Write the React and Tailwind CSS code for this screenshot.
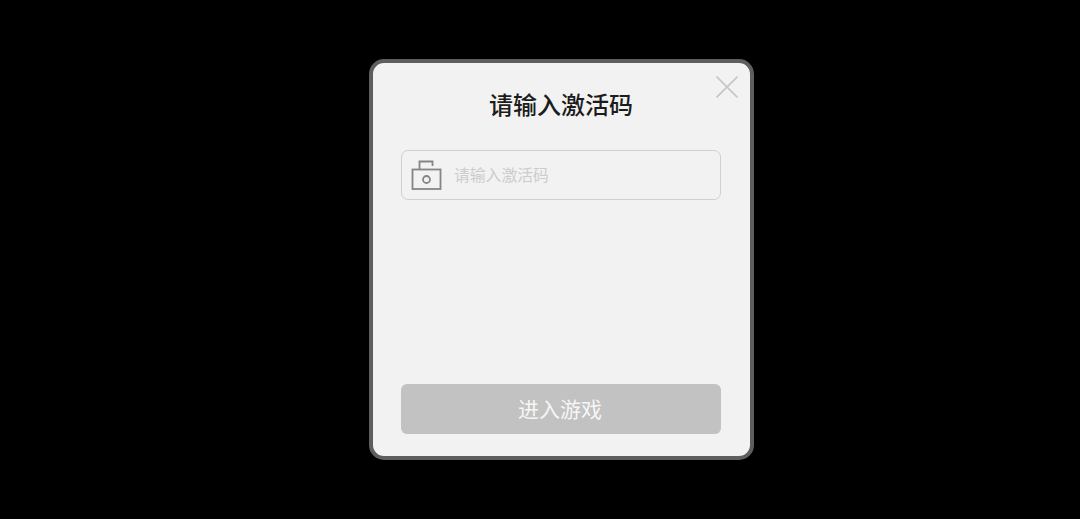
export default function App() {
  return (
    <div className="min-h-screen bg-black pl-[369px] pt-[59px] font-['Noto_Sans_CJK_SC',sans-serif]">
      <div className="relative flex h-[401px] w-[385px] flex-col rounded-[15px] border-[4px] border-[#5e5e5e] bg-[#f2f2f2] pl-[28px] pr-[29px]">
        {/* Botón de cerrar */}
        <button className="absolute right-[12px] top-[13px] h-[22px] w-[22px]">
          <svg width="22" height="22" viewBox="0 0 22 22" fill="none" stroke="#c6c6c6" strokeWidth="1.6">
            <path d="M0.5 0.5L21.5 21.5M21.5 0.5L0.5 21.5" />
          </svg>
        </button>

        <h1 className="mt-[23px] text-center text-[24px] font-medium leading-[36px] text-[#1c1c1c]">请输入激活码</h1>

        <div className="mt-[28px] flex h-[50px] items-center rounded-[7px] border border-[#d0d0d0] pl-[9px]">
          <svg width="32" height="32" viewBox="0 0 32 32" fill="none" stroke="#858585" strokeWidth="1.8">
            <rect x="1.5" y="10.5" width="28" height="19.5" />
            <path d="M8.5 10.5V2.5H21.5V7" />
            <circle cx="15.5" cy="20.5" r="3.5" />
          </svg>
          <span className="ml-[11px] text-[15.8px] text-[#cccccc]">请输入激活码</span>
        </div>

        <button className="mt-auto mb-[22px] flex h-[50px] items-center justify-center rounded-[6px] bg-[#c2c2c2] pr-[2px] text-[21px] text-[#f6f6f6]">
          进入游戏
        </button>
      </div>
    </div>
  );
}
